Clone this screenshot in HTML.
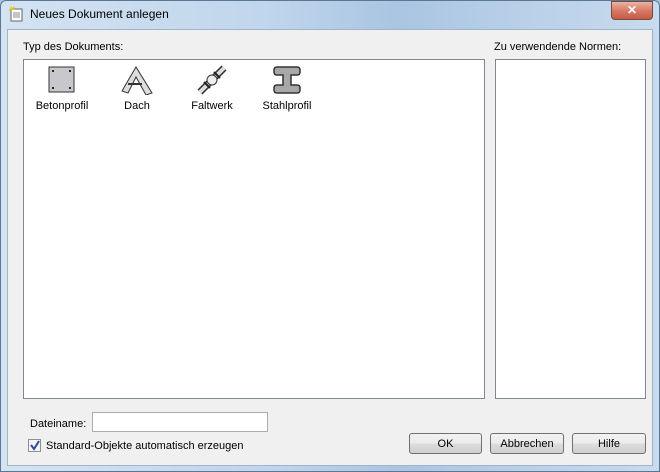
<!DOCTYPE html>
<html><head><meta charset="utf-8"><style>
*{margin:0;padding:0;box-sizing:border-box}
body{width:660px;height:472px;overflow:hidden;font-family:"Liberation Sans",sans-serif;font-size:11px;color:#000;background:#a9c4df;position:relative}
.frame{position:absolute;left:0;top:0;width:660px;height:472px;background:linear-gradient(90deg,#d3e3f2 0%,#c0d6ec 40%,#aac5e2 60%,#c8dbee 100%);border:1px solid #5a7795;border-radius:6px 6px 0 0}
.title{position:absolute;left:30px;top:7px;font-size:12px;color:#000}
.close{position:absolute;left:611px;top:1px;width:42px;height:19px;background:linear-gradient(#eab3a6,#d77a66 50%,#c65a44);border:1px solid #7a4a3e;border-radius:0 0 4px 4px;color:#fff;font-weight:bold;text-align:center;font-size:12px;line-height:17px}
.client{position:absolute;left:7px;top:29px;width:646px;height:437px;background:#f0f0f0;border:1px solid #a0b4c8}
.lbl{position:absolute}
.box{position:absolute;background:#fff;border:1px solid #828790}
.item{position:absolute;width:70px;text-align:center;font-size:11px}
.item svg{display:block;margin:0 auto 5px;height:30px}
.btn{position:absolute;height:21px;border:1px solid #707070;border-radius:3px;background:linear-gradient(#f2f2f2 0%,#ebebeb 50%,#dddddd 51%,#cfcfcf 100%);text-align:center;line-height:20px;font-size:11px}
.inp{position:absolute;background:#fff;border:1px solid #abadb3}
.cb{position:absolute;width:13px;height:13px;border:1px solid #8f8f8f;background:#f4f4f4}
</style></head><body>
<div class="frame"></div>
<svg style="position:absolute;left:8px;top:6px" width="16" height="16"><rect x="3" y="3" width="11" height="12" fill="#fff" stroke="#666"/><path d="M5 7h7M5 9h7M5 11h7" stroke="#888"/><path d="M3 1l1 3M1 4l3 0M6 1l-1 3" stroke="#e8c000" stroke-width="1.5"/></svg>
<div class="title">Neues Dokument anlegen</div>
<div class="close">✕</div>
<div class="client"></div>
<div class="lbl" style="left:23px;top:41px">Typ des Dokuments:</div>
<div class="lbl" style="left:494px;top:41px">Zu verwendende Normen:</div>
<div class="box" style="left:23px;top:59px;width:462px;height:340px">
 <div class="item" style="left:3px;top:5px"><svg width="30" height="30" viewBox="0 0 30 30"><rect x="2" y="2" width="25" height="25" fill="#c8c8cc" stroke="#333"/><g fill="#222"><rect x="5" y="5" width="2" height="2"/><rect x="22" y="5" width="2" height="2"/><rect x="5" y="22" width="2" height="2"/><rect x="22" y="22" width="2" height="2"/></g></svg>Betonprofil</div>
 <div class="item" style="left:78px;top:5px"><svg width="34" height="30"><path d="M2 26L16 2L32 28L26 30L16 12L8 28Z" fill="#ddd" stroke="#333"/><path d="M8 19h14" stroke="#333" stroke-width="2"/></svg>Dach</div>
 <div class="item" style="left:153px;top:5px"><svg width="30" height="30"><path d="M3 27L27 3" stroke="#333" stroke-width="7"/><path d="M3 27L27 3" stroke="#ddd" stroke-width="4"/><circle cx="15" cy="15" r="5" fill="#eee" stroke="#333"/><path d="M7 17l6 6M17 7l6 6" stroke="#222" stroke-width="2"/></svg>Faltwerk</div>
 <div class="item" style="left:228px;top:5px"><svg width="30" height="30"><path d="M2 5q0-3 3-3h20q3 0 3 3v2q0 3-3 3h-6v10h6q3 0 3 3v2q0 3-3 3H5q-3 0-3-3v-2q0-3 3-3h6V10H5Q2 10 2 7Z" fill="#a8a8a8" stroke="#333" stroke-width="1.5"/></svg>Stahlprofil</div>
</div>
<div class="box" style="left:495px;top:59px;width:151px;height:340px"></div>
<div class="lbl" style="left:30px;top:418px">Dateiname:</div>
<div class="inp" style="left:92px;top:412px;width:176px;height:20px"></div>
<div class="cb" style="left:28px;top:439px"><svg width="11" height="11" style="position:absolute;left:0;top:0"><path d="M2 5l3 4l5-8" stroke="#2a4a9a" stroke-width="2" fill="none"/></svg></div>
<div class="lbl" style="left:46px;top:440px">Standard-Objekte automatisch erzeugen</div>
<div class="btn" style="left:409px;top:433px;width:73px">OK</div>
<div class="btn" style="left:490px;top:433px;width:74px">Abbrechen</div>
<div class="btn" style="left:572px;top:433px;width:74px">Hilfe</div>
</body></html>
